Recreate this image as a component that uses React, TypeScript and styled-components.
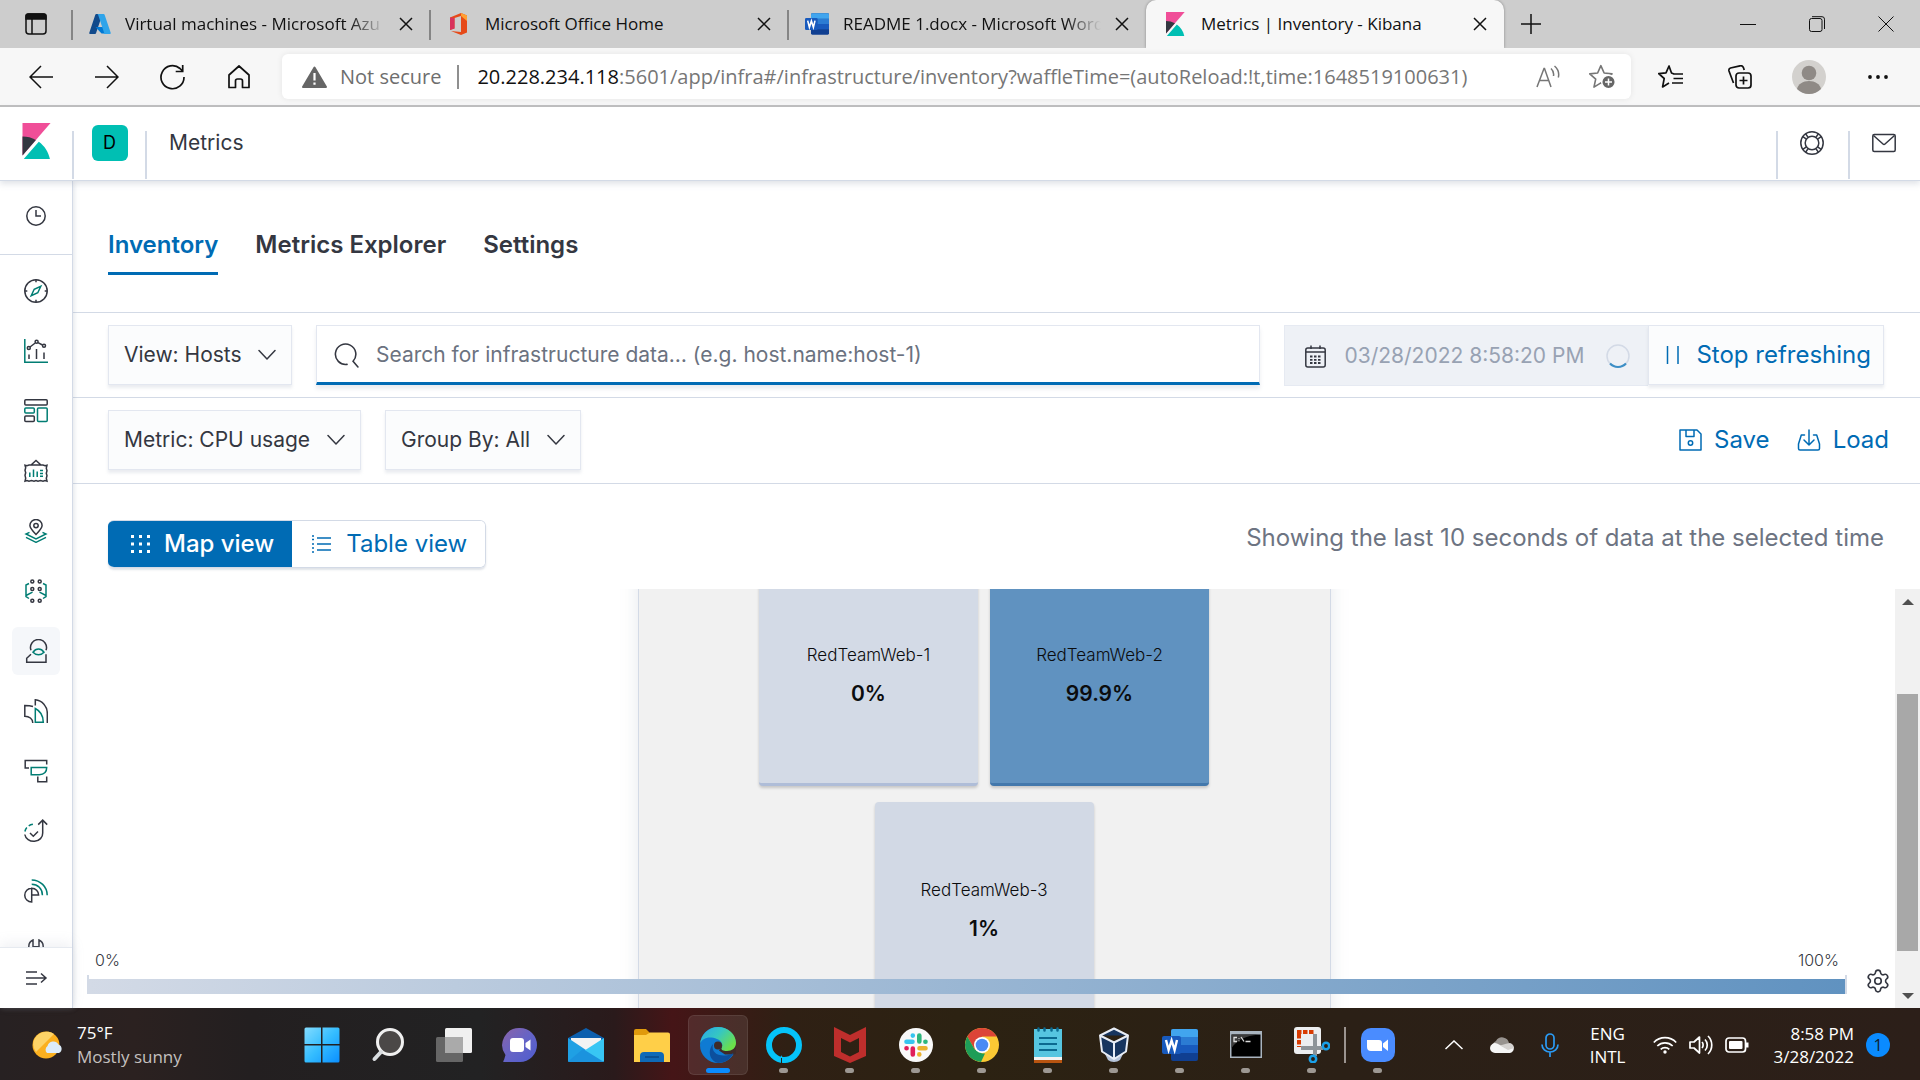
import React from "react";
import styled, { createGlobalStyle, css } from "styled-components";
import { Settings } from "lucide-react";

const ui = `"Inter", "Liberation Sans", sans-serif`;
const system = `"Open Sans", "Noto Sans", sans-serif`;
const ink = "#343741";
const teal = "#017d73";
const blue = "#006bb4";
const line = "#d3dae6";

const GlobalStyle = createGlobalStyle`
  *, *::before, *::after { box-sizing: border-box; }
  body { margin: 0; overflow: hidden; background: #fff; }
  button, input, select { font: inherit; color: inherit; margin: 0; }
  svg { display: block; flex: none; }
`;

const Screen = styled.div`
  display: flex;
  flex-direction: column;
  height: 100vh;
  font-family: ${ui};
  color: ${ink};
`;

/* ---------- browser chrome ---------- */

const TabStrip = styled.div`
  display: flex;
  align-items: stretch;
  height: 48px;
  flex: none;
  background: #cdcdcd;
  font: 17px/24px ${system};
  color: #111;
`;

const PlainButton = styled.button`
  display: flex;
  align-items: center;
  justify-content: center;
  border: 0;
  padding: 0;
  background: none;
`;

const StripButton = styled(PlainButton)<{ $w: number }>`
  width: ${(p) => p.$w}px;
`;

const BrowserTab = styled.div<{ $active?: boolean }>`
  display: flex;
  align-items: center;
  flex: 0 1 358px;
  min-width: 0;
  padding: 0 17px;
  gap: 14px;
  position: relative;
  ${(p) =>
    p.$active
      ? css`
          background: #f7f7f7;
          border-radius: 10px 10px 0 0;
          box-shadow: 0 0 3px rgba(0, 0, 0, 0.35);
          clip-path: inset(0 -4px 0 -4px);
        `
      : css`
          &::before {
            content: "";
            position: absolute;
            left: -1px;
            top: 10px;
            width: 2px;
            height: 30px;
            background: #858585;
          }
        `}
`;

const TabTitle = styled.span<{ $fade?: boolean }>`
  flex: 1;
  min-width: 0;
  overflow: hidden;
  white-space: nowrap;
  ${(p) => p.$fade && css`mask-image: linear-gradient(90deg, #000 calc(100% - 36px), transparent);`}
`;

const Spacer = styled.div`
  flex: 1;
`;

const Toolbar = styled.div`
  display: flex;
  align-items: center;
  height: 59px;
  flex: none;
  padding: 0 8px;
  background: #f7f7f7;
  border-bottom: 2px solid #bfbfbf;
  font: 20px/28px ${system};
`;

const ToolButton = styled(PlainButton)<{ $wide?: boolean }>`
  width: ${(p) => (p.$wide ? 69 : 66)}px;
  height: 48px;
`;

const AddressBar = styled.div`
  display: flex;
  align-items: center;
  flex: 1;
  min-width: 0;
  height: 45px;
  margin: 0 5px 0 10px;
  padding: 0 2px 0 20px;
  border-radius: 6px;
  background: #fff;
  box-shadow: 0 0 6px rgba(0, 0, 0, 0.08);
  color: #6e6e6e;
`;

const Security = styled.button`
  display: flex;
  align-items: center;
  gap: 13px;
  border: 0;
  padding: 0 16px 0 0;
  background: none;
  border-right: 2px solid #8f8f8f;
  color: #6e6e6e;
  line-height: 24px;
`;

const Url = styled.div`
  flex: 1;
  min-width: 0;
  overflow: hidden;
  white-space: nowrap;
  padding-left: 18px;
  color: #767676;
  b {
    font-weight: 400;
    color: #111;
  }
`;

const AddressButton = styled(PlainButton)`
  width: 54px;
  height: 45px;
`;

/* ---------- Kibana shell ---------- */

const Header = styled.header`
  display: flex;
  align-items: stretch;
  height: 74px;
  flex: none;
  background: #fff;
  border-bottom: 1px solid ${line};
  box-shadow: 0 3px 6px rgba(152, 162, 179, 0.3);
  position: relative;
  z-index: 2;
`;

const HeaderCell = styled.div<{ $divider?: boolean }>`
  display: flex;
  justify-content: center;
  width: 72px;
  padding-top: 18px;
  ${(p) =>
    p.$divider &&
    css`
      background: linear-gradient(${line}, ${line}) 0 24px / 2px 48px no-repeat;
    `}
`;

const SpaceCell = styled(HeaderCell)`
  width: 73px;
  padding-left: 2px;
`;

const HeaderButton = styled(PlainButton)`
  width: 36px;
  height: 36px;
`;

const LogoButton = styled(PlainButton)`
  width: 36px;
  height: 32px;
`;

const SpaceBadge = styled.button`
  width: 36px;
  height: 36px;
  border: 0;
  padding: 0;
  border-radius: 6px;
  background: #00bfb3;
  color: #000;
  font-size: 18px;
  line-height: 36px;
`;

const Crumb = styled.div`
  flex: 1;
  padding: 20px 24px 0;
  font-size: 21px;
  line-height: 32px;
  background: linear-gradient(${line}, ${line}) 0 24px / 2px 48px no-repeat;
`;

const Shell = styled.div`
  display: flex;
  flex: 1;
  min-height: 0;
`;

const Sidebar = styled.nav`
  display: flex;
  flex-direction: column;
  width: 73px;
  flex: none;
  background: #fff;
  border-right: 1px solid ${line};
  box-shadow: 1px 0 5px rgba(152, 162, 179, 0.3);
  position: relative;
  z-index: 1;
`;

const Recent = styled.div`
  display: flex;
  justify-content: center;
  height: 74px;
  flex: none;
  padding-top: 11px;
  border-bottom: 1px solid ${line};
`;

const AppList = styled.div`
  display: flex;
  flex-direction: column;
  align-items: center;
  gap: 12px;
  flex: 1;
  min-height: 0;
  overflow: hidden;
  padding-top: 12px;
`;

const AppButton = styled(PlainButton)<{ $active?: boolean }>`
  width: 48px;
  height: 48px;
  flex: none;
  border-radius: 6px;
  background: ${(p) => (p.$active ? "#f5f7fa" : "none")};
`;

const Collapse = styled.div`
  display: flex;
  align-items: center;
  justify-content: center;
  height: 61px;
  flex: none;
  background: #fff;
  border-top: 1px solid #e6eaf0;
  box-shadow: 0 -4px 12px rgba(152, 162, 179, 0.15);
`;

const Main = styled.main`
  display: flex;
  flex-direction: column;
  flex: 1;
  min-width: 0;
`;

const PageTabs = styled.div`
  display: flex;
  gap: 37px;
  height: 132px;
  flex: none;
  padding: 37px 35px 0;
  border-bottom: 1px solid ${line};
`;

const PageTab = styled.a<{ $active?: boolean }>`
  height: 57px;
  padding-top: 9px;
  font-size: 24px;
  line-height: 36px;
  font-weight: 600;
  text-decoration: none;
  color: ${(p) => (p.$active ? blue : ink)};
  border-bottom: 3px solid ${(p) => (p.$active ? blue : "transparent")};
`;

const ControlRow = styled.div`
  display: flex;
  align-items: center;
  gap: 24px;
  height: 85px;
  flex: none;
  padding: 0 36px 0 35px;
  border-bottom: 1px solid ${line};
  & + & {
    height: 86px;
    padding-bottom: 2px;
  }
`;

const box = css`
  height: 60px;
  border: 1px solid #e3e7f0;
  background: #fbfcfd;
  box-shadow: 0 3px 3px rgba(152, 162, 179, 0.2);
`;

const Picker = styled.label`
  ${box}
  display: flex;
  align-items: center;
  gap: 16px;
  padding: 0 15px;
  font-size: 21px;
`;

const PickerSelect = styled.select`
  appearance: none;
  border: 0;
  padding: 0;
  background: none;
  line-height: 32px;
  outline: 0;
`;

const SearchBox = styled.label`
  display: flex;
  align-items: center;
  gap: 17px;
  flex: 1;
  height: 60px;
  padding: 2px 17px 0;
  border: 1px solid #e3e7f0;
  border-bottom: 3px solid ${blue};
  box-shadow: 0 4px 4px rgba(152, 162, 179, 0.2);
  font-size: 21px;
`;

const SearchInput = styled.input`
  flex: 1;
  min-width: 0;
  border: 0;
  padding: 0;
  outline: 0;
  background: none;
  line-height: 32px;
  &::placeholder {
    color: #6b7280;
    opacity: 1;
  }
`;

const TimeGroup = styled.div`
  display: flex;
`;

const DateBox = styled.label`
  display: flex;
  align-items: center;
  height: 61px;
  padding: 2px 18px 0 20px;
  gap: 18px;
  background: #eef1f6;
  border: 1px solid #e6eaf2;
  border-right: 0;
  font-size: 21px;
`;

const DateInput = styled.input`
  width: 244px;
  border: 0;
  padding: 0;
  background: none;
  line-height: 32px;
  color: #98a2b3;
`;

const RefreshButton = styled.button`
  ${box}
  display: flex;
  align-items: center;
  gap: 16px;
  padding: 0 12px 0 17px;
  font-size: 24px;
  line-height: 36px;
  color: ${blue};
  white-space: nowrap;
`;

const TextButton = styled.button`
  display: flex;
  align-items: center;
  gap: 12px;
  border: 0;
  padding: 0;
  background: none;
  color: ${blue};
  font-size: 24px;
  line-height: 36px;
`;

const Actions = styled.div`
  display: flex;
  gap: 27px;
  margin: 0 -5px 0 auto;
`;

const ViewRow = styled.div`
  display: flex;
  justify-content: space-between;
  height: 105px;
  flex: none;
  padding: 36px 36px 0 35px;
`;

const Segment = styled.div`
  display: flex;
  height: 48px;
  border-radius: 6px;
  overflow: hidden;
  border: 1px solid ${line};
  border-left: 0;
  box-shadow: 0 2px 2px rgba(152, 162, 179, 0.3);
`;

const SegmentButton = styled.button<{ $on?: boolean }>`
  display: flex;
  align-items: center;
  gap: 12px;
  border: 0;
  padding: 0 18px 0 20px;
  margin: -1px 0;
  font-size: 24px;
  line-height: 36px;
  font-weight: ${(p) => (p.$on ? 500 : 400)};
  background: ${(p) => (p.$on ? blue : "#fff")};
  color: ${(p) => (p.$on ? "#fff" : blue)};
`;

const Note = styled.p`
  margin: 0;
  font-size: 24px;
  line-height: 36px;
  color: #6d7482;
`;

const Viewport = styled.section`
  display: flex;
  flex: 1;
  min-height: 0;
  position: relative;
  overflow: hidden;
`;

const MapArea = styled.div`
  flex: 1;
  display: flex;
  justify-content: center;
  align-items: flex-start;
  overflow: hidden;
`;

const HostGroup = styled.div`
  display: flex;
  flex-wrap: wrap;
  justify-content: center;
  gap: 16px 12px;
  width: 693px;
  margin-top: -23px;
  padding: 0 115px 60px;
  background: #f1f1f1;
  border: 1px solid ${line};
  box-shadow: 0 0 16px rgba(152, 162, 179, 0.25);
`;

const HostTile = styled.button<{ $fill: string; $edge: string }>`
  display: flex;
  flex-direction: column;
  align-items: center;
  justify-content: center;
  gap: 10px;
  width: 219px;
  height: 219px;
  border: 0;
  border-bottom: 3px solid ${(p) => p.$edge};
  border-radius: 4px;
  padding: 2px 0 0;
  background: ${(p) => p.$fill};
  box-shadow: 0 2px 3px rgba(0, 0, 0, 0.18);
  color: #0b0c0e;
`;

const HostName = styled.span`
  font-size: 17px;
  line-height: 26px;
  font-weight: 300;
`;

const HostValue = styled.strong`
  font-size: 21px;
  line-height: 32px;
  font-weight: 600;
`;

const Scrollbar = styled.div`
  display: flex;
  flex-direction: column;
  align-items: center;
  width: 25px;
  background: #f1f1f1;
`;

const ScrollArrow = styled(PlainButton)`
  width: 25px;
  height: 25px;
`;

const ScrollTrack = styled.div`
  flex: 1;
  width: 21px;
  padding: 80px 0 32px;
  display: flex;
`;

const ScrollThumb = styled.div`
  flex: 1;
  background: #a8a8a8;
`;

const Legend = styled.div`
  position: absolute;
  left: 14px;
  right: 29px;
  bottom: 14px;
  display: flex;
  align-items: flex-end;
  gap: 18px;
`;

const LegendScale = styled.div`
  flex: 1;
`;

const LegendLabels = styled.div`
  display: flex;
  justify-content: space-between;
  padding: 0 8px;
  font-size: 16px;
  line-height: 24px;
  font-weight: 300;
`;

const LegendBar = styled.div`
  height: 19px;
  margin-top: 3px;
  border: solid ${line};
  border-width: 0 2px;
  background: linear-gradient(90deg, #d3dae6, #6092c0) 0 4px / 100% 15px no-repeat;
`;

/* ---------- taskbar ---------- */

const Taskbar = styled.footer`
  display: flex;
  align-items: center;
  height: 72px;
  flex: none;
  padding: 2px 30px 0;
  background: linear-gradient(
    90deg, #272122 0%, #2b2120 7%, #231f20 13%, #222223 25%, #2a1a1b 32%, #451517 35%, #2f2014 41%, #2c2212 50%, #2b2016 70%, #2c1f19 100%
  );
  color: #fff;
  font: 17px/24px ${system};
`;

const Side = styled.div<{ $end?: boolean }>`
  display: flex;
  align-items: center;
  flex: 1 1 0;
  justify-content: ${(p) => (p.$end ? "flex-end" : "flex-start")};
`;

const Weather = styled(PlainButton)`
  gap: 12px;
  text-align: left;
  small {
    display: block;
    font-size: 17px;
    color: #c4c0bf;
  }
`;

const Apps = styled.div`
  display: flex;
  align-items: center;
  gap: 6px;
  margin-right: 34px;
`;

const AppSlot = styled.button<{ $state?: "open" | "active" }>`
  display: flex;
  flex-direction: column;
  align-items: center;
  width: 60px;
  height: 60px;
  padding: 11px 0 0;
  border: 1px solid ${(p) => (p.$state === "active" ? "rgba(255,255,255,.08)" : "transparent")};
  border-radius: 6px;
  background: ${(p) => (p.$state === "active" ? "rgba(255,255,255,.09)" : "none")};
  &::after {
    content: "";
    width: ${(p) => (p.$state === "active" ? 24 : 9)}px;
    height: 5px;
    margin-top: 5px;
    border-radius: 3px;
    background: ${(p) => (p.$state === "active" ? "#0a8bff" : p.$state === "open" ? "#9d9893" : "transparent")};
  }
`;

const Separator = styled.div`
  width: 2px;
  height: 36px;
  margin: 0 -4px;
  background: #9b9490;
`;

const Tray = styled.div`
  display: flex;
  align-items: center;
  gap: 12px;
`;

const TrayButton = styled(PlainButton)<{ $gap?: number }>`
  min-width: 24px;
  height: 48px;
  margin-right: ${(p) => p.$gap ?? 0}px;
`;

const Language = styled(TrayButton)`
  line-height: 23px;
`;

const Clock = styled(TrayButton)`
  text-align: right;
  line-height: 23px;
  margin-left: 12px;
`;

const Badge = styled.span`
  width: 24px;
  height: 24px;
  border-radius: 50%;
  background: #0a8bff;
  color: #10202e;
  font-size: 16px;
  line-height: 24px;
  text-align: center;
`;

/* ---------- drawings ---------- */

type SvgProps = { w?: number; h?: number; box?: string; stroke?: string; sw?: number; children: React.ReactNode };
const Svg = ({ w = 24, h = w, box: vb = "0 0 24 24", stroke = "none", sw = 1.5, children }: SvgProps) => (
  <svg width={w} height={h} viewBox={vb} fill="none" stroke={stroke} strokeWidth={sw} aria-hidden="true">
    {children}
  </svg>
);

const KibanaLogo = ({ size }: { size: number }) => (
  <Svg w={size} box="0 0 32 32">
    <path fill="#F04E98" d="M4 0v28.789L28.935.017z" />
    <path fill="#343741" d="M4 12v16.789l11.906-13.738A24.721 24.721 0 004 12" />
    <path fill="#00BFB3" d="M18.479 16.664L6.268 30.754l-1.073 1.237h23.191c-1.252-6.292-4.883-11.719-9.908-15.327" />
  </Svg>
);

const CloseX = () => (
  <Svg w={14} box="0 0 14 14" stroke="#111">
    <path d="M1 1l12 12M13 1L1 13" />
  </Svg>
);

const WordLogo = ({ size }: { size: number }) => (
  <Svg w={size} box="0 0 36 36">
    <rect x="9" y="2" width="27" height="32" rx="2" fill="#103f91" />
    <path fill="#185abd" d="M9 18h27v8H9z" />
    <path fill="#2b7cd3" d="M9 10h27v8H9z" />
    <path fill="#41a5ee" d="M11 2h23a2 2 0 012 2v6H9V4a2 2 0 012-2z" />
    <rect y="9" width="19" height="18" rx="2" fill="#185abd" />
    <path stroke="#fff" strokeWidth="2.4" d="M4 13l2.6 10 3-9.5L12.600 23 15 13" />
  </Svg>
);

const AzureLogo = () => (
  <Svg w={22} box="0 0 22 22">
    <path fill="#114a8b" d="M7.300 1h6.200L7 20.300a1 1 0 01-1 .7H1.300a1 1 0 01-1-1.300L6.300 1.700A1 1 0 017.300 1z" />
    <path fill="#0078d4" d="M16 14H6.500l6 6.500h5.500z" />
    <path fill="#2fa4ea" d="M15.600 1.700A1 1 0 0014.700 1H8.200a1 1 0 01.9.7l6 18a1 1 0 01-1 1.300h6.600a1 1 0 001-1.300z" />
  </Svg>
);

const OfficeLogo = () => (
  <Svg w={24} box="-2 0 24 24">
    <path fill="#e64a19" d="M12 1l6 2.500v17L12 23 2 19l10 1V4L5.500 6v10.500L1 18V5.500z" />
    <path fill="#ffa033" d="M12 1l6 2.500V9l-6-5z" />
    <path fill="#d8325c" d="M1 5.500L5.500 6v10.500L1 18z" />
  </Svg>
);

const navIcons: { name: string; art: React.ReactNode }[] = [
  {
    name: "Discover",
    art: (
      <>
        <circle cx="12" cy="12" r="11.200" />
        <path d="M12 .8v2.500M12 20.700v2.500M.8 12h2.500M20.700 12h2.500" />
        <path stroke={teal} d="M16.800 7.200l-3 6.600-6.600 3 3-6.600z" />
      </>
    ),
  },
  {
    name: "Visualize",
    art: (
      <>
        <path stroke={teal} d="M.8 0v23.200H24" />
        <path d="M5 15.500V20M12.500 10v10M20 13.500V20M6 8l5.200-4M14 3.700L18.500 6" />
        <circle cx="4.800" cy="9" r="1.500" />
        <circle cx="12.600" cy="2.800" r="1.500" />
        <circle cx="20" cy="6.800" r="1.500" />
      </>
    ),
  },
  {
    name: "Dashboard",
    art: (
      <>
        <rect x=".8" y=".8" width="22.400" height="5.200" rx="1" />
        <rect x=".8" y="17" width="9.500" height="5.500" rx="1" />
        <rect stroke={teal} x=".8" y="9" width="9.500" height="5" rx="1" />
        <rect stroke={teal} x="13.500" y="9" width="9.700" height="13.500" rx="1" />
      </>
    ),
  },
  {
    name: "Canvas",
    art: (
      <>
        <path d="M7 6l5-4.500L17 6M1 6.200l2 .5 2-.7h14l2 .7 2-.5-.7 3 .7 2.500-.7 2.500.7 2.500-.7 2.500.7 3-2-.6-2 .6-2.500-.6-2.500.6-2-.6-2 .6-2.500-.6-2.500.6-2-.6-2 .6.7-3L1 16.200l.7-2.500L1 11.200l.7-2.500z" />
        <path stroke={teal} d="M5.800 13.500V18M9.500 10.500V18M13.200 12.500V18M16 11.500h3M16 14.500h3M16 17.300h3" />
      </>
    ),
  },
  {
    name: "Maps",
    art: (
      <>
        <path d="M12 15.500C8 11.500 5.900 9.300 5.900 6.600a6.100 6.100 0 0112.200 0c0 2.700-2.100 4.900-6.100 8.900z" />
        <circle cx="12" cy="6.600" r="2.200" />
        <path stroke={teal} d="M5.500 13.300L2 15l10 5 10-5-3.500-1.700M2 18.300l10 5 10-5" />
      </>
    ),
  },
  {
    name: "Machine Learning",
    art: (
      <>
        {[2.500, 10, 21.700].map((y) => (
          <React.Fragment key={y}>
            <circle cx="8.300" cy={y} r="1.500" />
            <circle cx="15.700" cy={y} r="1.500" />
          </React.Fragment>
        ))}
        <path stroke={teal} d="M5 4.500l-3 1.500v11.500l3 2M19 4.500l3 1.500v11.500l-3 2M2 16.500l6.500-3.300M22 16.500l-6.500-3.300" />
      </>
    ),
  },
  {
    name: "Metrics",
    art: (
      <>
        <path d="M7 11.300a8 8 0 1115 0M7 15.300l-4.300 4V23.200H22v-8" />
        <path stroke={teal} d="M9 13.200c3-4.200 8-4.200 11 0-3 3.300-8 3.300-11 0z" />
      </>
    ),
  },
  {
    name: "Logs",
    art: (
      <>
        <path d="M9 7.500C6.500 6.700 4 6.500.8 6.500v10.700c4.400 0 8 2.500 8 6.800M11.300 6.500V.8c7 .7 12 6.500 12 13.500V24" />
        <path stroke={teal} d="M11.300 9.500c5 2.500 8 7.500 8 13.700h-8z" />
      </>
    ),
  },
  {
    name: "APM",
    art: (
      <>
        <path d="M5 9H1.200V1.500h21.500V5.500M13.800 17.500v5.300h8.900v-5.300" />
        <path stroke={teal} d="M7.200 8.600h15.500c0 4.500-3 7.100-7.500 7.100h-8z" />
      </>
    ),
  },
  {
    name: "Uptime",
    art: (
      <>
        <path d="M.8 15.500a9 8 0 0017.900-1.500V1.300M14.200 5.600l4.500-4.500 4.500 4.500M6 14l3.300 3.200L14 12.500" />
        <path stroke={teal} strokeDasharray="4.500 2.500" d="M.9 12.500c.8-4 4-7 9.500-7.300" />
      </>
    ),
  },
  {
    name: "SIEM",
    art: (
      <>
        <path d="M7.700 9.200a6.900 6.900 0 100 13.900V9.200c4 0 6.900 3 6.900 6.800H7.700" />
        <path stroke={teal} d="M7.700 5.200c6 0 10.700 4.600 10.700 11M7.700.9c8.500 0 15.500 6.800 15.500 15.300" />
      </>
    ),
  },
  {
    name: "Dev Tools",
    art: (
      <path d="M9 1C6 2.200 4.800 4.500 4.800 7.500c0 3 1.500 5 3.700 6v9.700h7v-9.700c2.200-1 3.700-3 3.700-6C19.200 4.500 18 2.200 15 1v6.800H9z" />
    ),
  },
];

const Chevron = () => (
  <Svg w={18} h={12} box="0 0 18 12" stroke={ink}>
    <path strokeLinecap="round" strokeLinejoin="round" d="M1 1.500l8 8.500 8-8.500" />
  </Svg>
);

type TaskApp = { name: string; state?: "open" | "active"; art: React.ReactNode };

const pinnedApps: TaskApp[] = [
  {
    name: "Start",
    art: (
      <>
        <defs>
          <linearGradient id="win" x1="0" y1="0" x2="1" y2="1">
            <stop stopColor="#83dcff" />
            <stop offset=".5" stopColor="#35bdff" />
            <stop offset="1" stopColor="#0a8fff" />
          </linearGradient>
        </defs>
        <path fill="url(#win)" d="M2 .5h15v16.500H.5V2A1.500 1.500 0 012 .5zM18.500.5H34A1.500 1.500 0 0135.500 2v15h-17zM.5 18.500H17v17H2A1.500 1.500 0 01.5 34zM18.500 18.500h17V34a1.500 1.500 0 01-1.500 1.500H18.500z" />
      </>
    ),
  },
  {
    name: "Search",
    art: (
      <>
        <circle cx="20" cy="15" r="12.500" fill="#4b4847" stroke="#f0f0f0" strokeWidth="3" />
        <path stroke="#d9dde0" strokeWidth="4" strokeLinecap="round" d="M11 25l-6.500 7" />
      </>
    ),
  },
  {
    name: "Task view",
    art: (
      <>
        <rect x="9" y="1" width="27" height="25" rx="1.500" fill="#f0f0f0" />
        <rect x="0" y="10" width="27" height="25" rx="1.500" fill="#666" />
        <path fill="#aaa" d="M9 10h18v16H9z" />
      </>
    ),
  },
  {
    name: "Chat",
    art: (
      <>
        <defs>
          <linearGradient id="chat" x1="0" y1="0" x2="1" y2="1">
            <stop stopColor="#8a63a8" />
            <stop offset=".5" stopColor="#6564c6" />
            <stop offset="1" stopColor="#4e5ccf" />
          </linearGradient>
        </defs>
        <path fill="url(#chat)" d="M18 1a17 17 0 110 34H2c-1 0-1-1 0-2l1.500-5A17 17 0 0118 1z" />
        <rect x="8" y="11" width="14" height="14" rx="3" fill="#fff" />
        <path fill="#fff" d="M23.500 16l5-3.500v11l-5-3.500z" />
      </>
    ),
  },
  {
    name: "Mail",
    art: (
      <>
        <path fill="#0c5fae" d="M0 11L18 1l18 10v4H0z" />
        <path fill="#f3f3f3" d="M3 11h30v14H3z" />
        <path fill="#1fa0e4" d="M0 11l36 24H1.500A1.500 1.500 0 010 33.500z" />
        <path fill="#38c6f4" d="M36 11L15 24.500 33 35h1.500a1.500 1.500 0 001.500-1.500z" />
        <path fill="#1b93de" d="M0 34.500L15 22l21 13H1z" />
      </>
    ),
  },
  {
    name: "File Explorer",
    art: (
      <>
        <path fill="#e09a0c" d="M0 4a2 2 0 012-2h10l4 4v8H0z" />
        <path fill="#ffcf48" d="M0 8h12l4-2.500h18a2 2 0 012 2V35H0z" />
        <path fill="#0f6ab8" d="M6 35v-6a4 4 0 014-4h16a4 4 0 014 4v6z" />
        <path stroke="#0a4987" strokeWidth="1.500" d="M11 30h14" />
      </>
    ),
  },
  {
    name: "Edge",
    state: "active",
    art: (
      <>
        <defs>
          <linearGradient id="edgeTop" x1="0" y1="0" x2="1" y2=".6">
            <stop stopColor="#2aa5e8" />
            <stop offset=".5" stopColor="#35c6c4" />
            <stop offset="1" stopColor="#6be04a" />
          </linearGradient>
        </defs>
        <circle cx="18" cy="18" r="18" fill="#0f7bd3" />
        <path fill="#3f2b29" d="M36.500 16v11l-3.500.5-8 0-6-4 4-6z" />
        <path fill="#0c4f9d" d="M13 17c-2 8 4 12 12 11.500 3 0 6-1 8.500-2.500C30 33 24 36 18 36c-8-2-11-12-5-19z" />
        <path fill="url(#edgeTop)" d="M0 17C1 7 9 0 18 0c10 0 18 7 18 16 0 5-4 8-9 8-4 0-6-1-5.500-3 2-3 .5-7-4.500-9C9 9 2 11 0 17z" />
        <circle cx="18" cy="18.500" r="4" fill="#3f2b29" />
      </>
    ),
  },
  {
    name: "Alexa",
    state: "open",
    art: (
      <>
        <circle cx="18" cy="18" r="15" stroke="#05c3f9" strokeWidth="6" />
        <path fill="#05c3f9" d="M15 28l5 8-5-1z" />
        <path stroke="#2c2212" strokeWidth="1" d="M15.500 36v-5" />
      </>
    ),
  },
  {
    name: "McAfee",
    state: "open",
    art: <path fill="#be2e2c" fillRule="evenodd" d="M2 0l16 8L34 0v29l-16 7-16-7zM9 11v14l9 4.500 9-4.500V11l-9 4.500z" />,
  },
  {
    name: "Slack",
    state: "open",
    art: (
      <>
        <circle cx="18" cy="18" r="17" fill="#fafafa" />
        <g strokeWidth="4.600" strokeLinecap="round">
          <path stroke="#36c5f0" d="M8.500 14.800h6M14.800 8.500v.1" />
          <path stroke="#2eb67d" d="M21.300 8.500v6M27.500 14.800h-.1" />
          <path stroke="#ecb22e" d="M27.500 21.300h-6M21.300 27.500v-.1" />
          <path stroke="#e01e5a" d="M14.800 27.500v-6M8.500 21.300h.1" />
        </g>
      </>
    ),
  },
  {
    name: "Chrome",
    state: "open",
    art: (
      <>
        <circle cx="18" cy="18" r="17" fill="#fbc934" />
        <path fill="#dc4437" d="M3.300 9.500A17 17 0 0132.700 9.500H18l-7.400 12.700z" />
        <path fill="#1e9d58" d="M3.300 9.500l7.300 12.700L18 26.500h3L17 35A17 17 0 013.300 9.500z" />
        <circle cx="18" cy="18" r="8" fill="#fff" />
        <circle cx="18" cy="18" r="6.300" fill="#4a8af4" />
      </>
    ),
  },
  {
    name: "Notepad",
    state: "open",
    art: (
      <>
        <path fill="#b85410" d="M4 30h28v6H4z" />
        <path fill="#f2f2f2" d="M4 29h28v4H4z" />
        <path fill="#56c5e0" d="M4 2h28v28H4z" />
        <path stroke="#0b6a90" strokeWidth="1.800" d="M9 11h18M9 17h18M9 23h18" />
        <path stroke="#0b6a90" strokeWidth="2.500" strokeLinecap="round" d="M8.500 1.500v2M14.500 1.500v2M21.500 1.500v2M27.500 1.500v2" />
      </>
    ),
  },
  {
    name: "VirtualBox",
    state: "open",
    art: (
      <>
        <path fill="#b6c4da" d="M9 27h18l-3 6c-3 2.500-9 2.500-12 0z" />
        <path fill="#17355f" stroke="#e8edf6" strokeWidth="2" strokeLinejoin="round" d="M18 1.500l14 7-2 16L18 32 6 24.500l-2-16zM4 8.500l14 7 14-7M18 15.500V32" />
      </>
    ),
  },
  { name: "Word", state: "open", art: <WordLogo size={36} /> },
  {
    name: "Command Prompt",
    state: "open",
    art: (
      <>
        <rect x="2" y="4" width="32" height="27" fill="#a9b4bf" />
        <path fill="#000" d="M3.500 7.500h29v22h-29z" />
        <path fill="#3c3c3c" d="M3.500 7.500h27C18 9 9 13 3.500 21z" />
        <path stroke="#ddd" strokeWidth="1.300" d="M9 10.500H6v4h3M11 11v.8M11 13.500v.8M13 10l3 4.500M17.500 14.500h5" />
      </>
    ),
  },
  {
    name: "Snipping Tool",
    state: "open",
    art: (
      <>
        <rect width="27" height="27" rx="3" fill="#eceef0" />
        <path stroke="#d83b01" strokeWidth="4" strokeDasharray="4.500 1.500" d="M3 5h17M5 7v13" />
        <path stroke="#8d9499" strokeWidth="4" d="M21 7v22M7 21h22" />
        <circle cx="32" cy="19" r="3.200" stroke="#1aa0e8" strokeWidth="2.500" />
        <circle cx="19" cy="32" r="3.200" stroke="#1aa0e8" strokeWidth="2.500" />
      </>
    ),
  },
];

const runningApps: TaskApp[] = [
  {
    name: "Zoom",
    state: "open",
    art: (
      <>
        <rect x="1" y="1" width="34" height="34" rx="10" fill="#4a8cff" />
        <path fill="#fff" d="M7 13h12a3 3 0 013 3v8H11a4 4 0 01-4-4zM23 16.500l5-4v11.500l-5-4z" />
      </>
    ),
  },
];

const AppSlots = ({ list }: { list: TaskApp[] }) => (
  <>
    {list.map((a) => (
      <AppSlot key={a.name} $state={a.state} aria-label={a.name}>
        <Svg w={36} box="0 0 36 36">{a.art}</Svg>
      </AppSlot>
    ))}
  </>
);

const hosts = [
  { name: "RedTeamWeb-1", value: "0%", fill: "#d3dae6", edge: "#afbdd8" },
  { name: "RedTeamWeb-2", value: "99.9%", fill: "#6092c0", edge: "#4378ac" },
  { name: "RedTeamWeb-3", value: "1%", fill: "#d2d9e5", edge: "#afbdd8" },
];

const starPath = "M11 1.500l3 6.800 7.300.8-5.500 4.900 1.600 7.400L11 17.500l-6.400 3.900L6.200 14 .7 9.100 8 8.300z";

export default function App() {
  return (
    <Screen>
      <GlobalStyle />
      <TabStrip>
        <StripButton $w={72} aria-label="Tab actions">
          <Svg w={22} box="0 0 22 22" stroke="#111">
            <rect x="1" y="1" width="20" height="20" rx="3" />
            <path fill="#111" d="M1 6V3a2 2 0 012-2h16a2 2 0 012 2v3z" />
            <path d="M7 6v15" />
          </Svg>
        </StripButton>
        <BrowserTab>
          <AzureLogo />
          <TabTitle $fade>Virtual machines - Microsoft Azu</TabTitle>
          <PlainButton aria-label="Close tab"><CloseX /></PlainButton>
        </BrowserTab>
        <BrowserTab>
          <OfficeLogo />
          <TabTitle>Microsoft Office Home</TabTitle>
          <PlainButton aria-label="Close tab"><CloseX /></PlainButton>
        </BrowserTab>
        <BrowserTab>
          <WordLogo size={24} />
          <TabTitle $fade>README 1.docx - Microsoft Word</TabTitle>
          <PlainButton aria-label="Close tab"><CloseX /></PlainButton>
        </BrowserTab>
        <BrowserTab $active>
          <KibanaLogo size={24} />
          <TabTitle>Metrics | Inventory - Kibana</TabTitle>
          <PlainButton aria-label="Close tab"><CloseX /></PlainButton>
        </BrowserTab>
        <StripButton $w={54} aria-label="New tab">
          <Svg w={20} box="0 0 20 20" stroke="#111"><path d="M10 0v20M0 10h20" /></Svg>
        </StripButton>
        <Spacer />
        <StripButton $w={69} aria-label="Minimize">
          <Svg w={16} box="0 0 16 16" stroke="#111" sw={1}><path d="M0 8.500h16" /></Svg>
        </StripButton>
        <StripButton $w={69} aria-label="Restore">
          <Svg w={16} box="0 0 16 16" stroke="#111" sw={1}>
            <rect x=".5" y="2.500" width="12.500" height="13" rx="2" />
            <path d="M3 .7h10a2.500 2.500 0 012.500 2.500V13" />
          </Svg>
        </StripButton>
        <StripButton $w={69} aria-label="Close window">
          <Svg w={16} box="0 0 16 16" stroke="#111" sw={1}><path d="M.5.5l15 15M15.500.5l-15 15" /></Svg>
        </StripButton>
      </TabStrip>

      <Toolbar>
        <ToolButton aria-label="Back">
          <Svg stroke="#111"><path d="M24 12H1M12 1L1 12l11 11" /></Svg>
        </ToolButton>
        <ToolButton aria-label="Forward">
          <Svg stroke="#111"><path d="M0 12h23M12 1l11 11-11 11" /></Svg>
        </ToolButton>
        <ToolButton aria-label="Refresh">
          <Svg w={26} box="0 0 26 26" stroke="#111" sw={1.7}><path d="M24 13a11.500 11.500 0 11-4-8.500L22.500 7M22.700 1v6.500h-7" /></Svg>
        </ToolButton>
        <ToolButton aria-label="Home">
          <Svg stroke="#111" sw={1.7}><path strokeLinejoin="round" d="M2 10L12 1l10 9v12.500h-6.500V16a2 2 0 00-2-2h-3a2 2 0 00-2 2v6.500H2z" /></Svg>
        </ToolButton>
        <AddressBar>
          <Security>
            <Svg w={25} h={22} box="0 0 25 22">
              <path fill="#666" stroke="#666" strokeWidth="2" strokeLinejoin="round" d="M12.500 1.500L24 21H1z" />
              <path stroke="#fff" strokeWidth="2.200" d="M12.500 7v7.500M12.500 16.500v2.200" />
            </Svg>
            Not secure
          </Security>
          <Url role="textbox" aria-label="Address">
            <b>20.228.234.118</b>:5601/app/infra#/infrastructure/inventory?waffleTime=(autoReload:!t,time:1648519100631)
          </Url>
          <AddressButton aria-label="Read aloud">
            <Svg stroke="#767676"><path d="M1 22L8 3.500h.5L15 22M3.500 15.500h9.500M15 3.500c2 1.800 3 4.500 2.500 7.500M18.500 1c3.500 3 4.800 7.500 3.800 11.500" /></Svg>
          </AddressButton>
          <AddressButton aria-label="Add to favorites">
            <Svg w={27} h={25} box="0 0 27 25" stroke="#767676">
              <path strokeLinejoin="round" d={starPath} transform="scale(1.080)" />
              <circle cx="19.500" cy="18" r="6.800" fill="#666" stroke="#fff" />
              <path stroke="#fff" d="M19.500 14.500v7M16 18h7" />
            </Svg>
          </AddressButton>
        </AddressBar>
        <ToolButton $wide aria-label="Favorites">
          <Svg w={25} box="0 0 25 24" stroke="#111" sw={1.7}>
            <path strokeLinejoin="round" d="M16 9.500l-2.500-1L11 1.500 8 8.300.7 9.100 6.200 14l-1.600 8.400L11 18.500" />
            <path d="M15.500 9.500H25M15.500 14H25M14 18.500h11" />
          </Svg>
        </ToolButton>
        <ToolButton $wide aria-label="Collections">
          <Svg stroke="#111" sw={1.7}>
            <rect x="8" y="8" width="15" height="15" rx="3" />
            <path d="M15.500 11.500v8M11.500 15.500h8M5.500 18L1 6a2.500 2.500 0 011.500-3L12 .8a3 3 0 013.500 2l.7 2.200" />
          </Svg>
        </ToolButton>
        <ToolButton $wide aria-label="Profile">
          <Svg w={34} box="0 0 34 34">
            <circle cx="17" cy="17" r="17" fill="#d3d1ce" />
            <circle cx="17" cy="13" r="7.300" fill="#8f8a86" />
            <path fill="#8f8a86" d="M5 29c1-5 6-8 12-8s11 3 12 8a17 17 0 01-24 0z" />
          </Svg>
        </ToolButton>
        <ToolButton $wide aria-label="More">
          <Svg w={20} h={4} box="0 0 20 4">
            <circle cx="2" cy="2" r="1.900" fill="#111" /><circle cx="10" cy="2" r="1.900" fill="#111" /><circle cx="18" cy="2" r="1.900" fill="#111" />
          </Svg>
        </ToolButton>
      </Toolbar>

      <Header>
        <HeaderCell>
          <LogoButton aria-label="Kibana home"><KibanaLogo size={36} /></LogoButton>
        </HeaderCell>
        <SpaceCell $divider><SpaceBadge aria-label="Default space">D</SpaceBadge></SpaceCell>
        <Crumb>Metrics</Crumb>
        <HeaderCell $divider>
          <HeaderButton aria-label="Help">
            <Svg stroke={ink}>
              <circle cx="12" cy="12" r="11.200" />
              <circle cx="12" cy="12" r="6.800" />
              <path d="M21.200 18.400l-3.600-2.500M18.400 21.200l-2.500-3.600M2.800 18.400l3.600-2.500M5.600 21.200l2.500-3.600M21.200 5.600l-3.600 2.500M18.400 2.800l-2.500 3.600M2.800 5.600l3.600 2.500M5.600 2.800l2.500 3.600" />
            </Svg>
          </HeaderButton>
        </HeaderCell>
        <HeaderCell $divider>
          <HeaderButton aria-label="Newsfeed">
            <Svg stroke={ink}>
              <rect x=".8" y="3.500" width="22.400" height="17" rx="1.500" />
              <path d="M1.500 4.500L11 13a1.500 1.500 0 002 0l9.500-8.500" />
            </Svg>
          </HeaderButton>
        </HeaderCell>
      </Header>

      <Shell>
        <Sidebar aria-label="Apps">
          <Recent>
            <AppButton aria-label="Recently viewed">
              <Svg w={20} box="0 0 20 20" stroke={ink}><circle cx="10" cy="10" r="9.200" /><path d="M10 4v6h5" /></Svg>
            </AppButton>
          </Recent>
          <AppList>
            {navIcons.map((i) => (
              <AppButton key={i.name} aria-label={i.name} $active={i.name === "Metrics"}>
                <Svg stroke={ink}>{i.art}</Svg>
              </AppButton>
            ))}
          </AppList>
          <Collapse>
            <PlainButton aria-label="Expand navigation">
              <Svg stroke={ink}><path d="M2 6h11M2 12h20M2 18h11M17 7.500l5 4.500-5 4.500" /></Svg>
            </PlainButton>
          </Collapse>
        </Sidebar>

        <Main>
          <PageTabs>
            <PageTab href="#inventory" $active>Inventory</PageTab>
            <PageTab href="#explorer">Metrics Explorer</PageTab>
            <PageTab href="#settings">Settings</PageTab>
          </PageTabs>

          <ControlRow>
            <Picker>
              <PickerSelect aria-label="View"><option>View: Hosts</option></PickerSelect>
              <Chevron />
            </Picker>
            <SearchBox>
              <Svg w={25} stroke={ink}>
                <path strokeLinecap="round" d="M12.500 20.500A9.800 9.800 0 1118.300 17.500L23 23" />
              </Svg>
              <SearchInput aria-label="Search" placeholder="Search for infrastructure data… (e.g. host.name:host-1)" />
            </SearchBox>
            <TimeGroup>
              <DateBox>
                <Svg w={21} h={23} box="0 0 21 23" stroke={ink}>
                  <rect x=".8" y="3" width="19.400" height="19" rx="2" />
                  <path d="M1 7h19M6 .5V4M15 .5V4" />
                  <path strokeDasharray="2.500 1.500" strokeWidth="1.800" d="M5 11.500h11M5 14.800h11M5 18h11" />
                </Svg>
                <DateInput aria-label="Time" readOnly value="03/28/2022 8:58:20 PM" />
                <Svg w={24} sw={1.500}>
                  <circle cx="12" cy="12" r="11" stroke="#d3dae6" />
                  <path stroke="#3d8fc6" strokeWidth="2" d="M4 19.500a11 11 0 0016 0" />
                </Svg>
              </DateBox>
              <RefreshButton>
                <Svg w={14} h={18} box="0 0 14 18" stroke={blue}><path d="M1.500 0v18M12 0v18" /></Svg>
                Stop refreshing
              </RefreshButton>
            </TimeGroup>
          </ControlRow>

          <ControlRow>
            <Picker>
              <PickerSelect aria-label="Metric"><option>Metric: CPU usage</option></PickerSelect>
              <Chevron />
            </Picker>
            <Picker>
              <PickerSelect aria-label="Group by"><option>Group By: All</option></PickerSelect>
              <Chevron />
            </Picker>
            <Actions>
              <TextButton>
                <Svg w={23} h={22} box="0 0 23 22" stroke={blue}>
                  <path strokeLinejoin="round" d="M1 1h17l4 4v16H1zM7 1v6.500h8V1" />
                  <circle cx="11.500" cy="14" r="2.200" />
                </Svg>
                Save
              </TextButton>
              <TextButton>
                <Svg w={24} h={22} box="0 0 24 22" stroke={blue}>
                  <path strokeLinecap="round" strokeLinejoin="round" d="M12 1v15M7 11l5 5 5-5M7.500 6H4.300L1.500 15v4.500A1.500 1.500 0 003 21h18a1.500 1.500 0 001.500-1.500V15L19.700 6h-3.200" />
                </Svg>
                Load
              </TextButton>
            </Actions>
          </ControlRow>

          <ViewRow>
            <Segment>
              <SegmentButton $on>
                <Svg stroke="#fff" sw={3}>
                  <path strokeDasharray="3 5" d="M3 4.500h19M3 12h19M3 19.500h19" />
                </Svg>
                Map view
              </SegmentButton>
              <SegmentButton>
                <Svg w={22} h={18} box="0 0 22 18" stroke={blue}>
                  <path d="M5 3h14M5 9h14M5 15h14M0 1h2M0 4.500h2M0 9h2M0 13h2M0 17h2" />
                </Svg>
                Table view
              </SegmentButton>
            </Segment>
            <Note>Showing the last 10 seconds of data at the selected time</Note>
          </ViewRow>

          <Viewport>
            <MapArea>
              <HostGroup>
                {hosts.map((h) => (
                  <HostTile key={h.name} $fill={h.fill} $edge={h.edge}>
                    <HostName>{h.name}</HostName>
                    <HostValue>{h.value}</HostValue>
                  </HostTile>
                ))}
              </HostGroup>
            </MapArea>
            <Scrollbar>
              <ScrollArrow aria-label="Scroll up"><Svg w={12} h={6} box="0 0 12 6"><path fill="#505050" d="M0 6l6-6 6 6z" /></Svg></ScrollArrow>
              <ScrollTrack><ScrollThumb /></ScrollTrack>
              <ScrollArrow aria-label="Scroll down"><Svg w={12} h={6} box="0 0 12 6"><path fill="#505050" d="M0 0l6 6 6-6z" /></Svg></ScrollArrow>
            </Scrollbar>
            <Legend>
              <LegendScale>
                <LegendLabels><span>0%</span><span>100%</span></LegendLabels>
                <LegendBar />
              </LegendScale>
              <PlainButton aria-label="Legend settings"><Settings size={26} strokeWidth={1.5} color={ink} /></PlainButton>
            </Legend>
          </Viewport>
        </Main>
      </Shell>

      <Taskbar>
        <Side>
          <Weather>
            <Svg w={35} h={30} box="0 0 35 30">
              <circle cx="16" cy="15" r="13.500" fill="#fbb01f" />
              <path fill="#fdd367" d="M4 10A13.500 13.500 0 0124 4L6 22A13 13 0 014 10z" />
              <path fill="#dcecf9" d="M17 23a4.500 4.500 0 01.5-7 6 6 0 0111-1.500A4.600 4.600 0 0129 23z" />
            </Svg>
            <span>75°F<small>Mostly sunny</small></span>
          </Weather>
        </Side>
        <Apps>
          <AppSlots list={pinnedApps} />
          <Separator />
          <AppSlots list={runningApps} />
        </Apps>
        <Side $end>
          <Tray>
            <TrayButton $gap={12} aria-label="Hidden icons">
              <Svg w={18} h={10} box="0 0 18 10" stroke="#fff"><path d="M.5 9L9 1l8.500 8" /></Svg>
            </TrayButton>
            <TrayButton $gap={12} aria-label="OneDrive">
              <Svg w={24} h={16} box="0 0 24 16">
                <path fill="#98938f" d="M3 7a5 5 0 013-3 7 7 0 0113 2L12 11z" />
                <path fill="#f5f5f5" d="M0 11a5 5 0 017-4.500L18 12l5.500-2A4.500 4.500 0 0120 16H5a5 5 0 01-5-5z" />
                <path fill="#d5d2d0" d="M10 8.500L19 6a5 5 0 015 5l-6 2z" />
              </Svg>
            </TrayButton>
            <TrayButton $gap={16} aria-label="Microphone">
              <Svg stroke="#2b9bf4" sw={1.700}><rect x="8" y="1" width="8" height="15" rx="4" /><path d="M4 11.500a8 7.500 0 0016 0M12 19v5" /></Svg>
            </TrayButton>
            <Language $gap={16}><span>ENG<br />INTL</span></Language>
            <TrayButton aria-label="Wi-Fi">
              <Svg stroke="#fff" sw={1.700}>
                <path d="M.8 9.500a15.500 15.500 0 0122.400 0M4.300 13a11 11 0 0115.400 0M7.700 16.300a6.200 6.200 0 018.600 0" />
                <circle cx="12" cy="19" r="1.700" fill="#fff" stroke="none" />
              </Svg>
            </TrayButton>
            <TrayButton aria-label="Volume">
              <Svg stroke="#fff" sw={1.700}><path strokeLinejoin="round" d="M1 9v6h4l5.500 5V4L5 9zM13 9c1.500 1.500 1.500 4.500 0 6M16 6.500c3 3 3 8 0 11M19 3c5 5 5 13 0 18" /></Svg>
            </TrayButton>
            <TrayButton aria-label="Battery">
              <Svg stroke="#fff" sw={1.700}><rect x="1" y="5" width="19.500" height="14" rx="3" /><rect x="4" y="8" width="13.500" height="8" rx="1" fill="#fff" stroke="none" /><path strokeWidth="3" d="M22 9.500v5" /></Svg>
            </TrayButton>
            <Clock><span>8:58 PM<br />3/28/2022</span></Clock>
            <Badge>1</Badge>
          </Tray>
        </Side>
      </Taskbar>
    </Screen>
  );
}
